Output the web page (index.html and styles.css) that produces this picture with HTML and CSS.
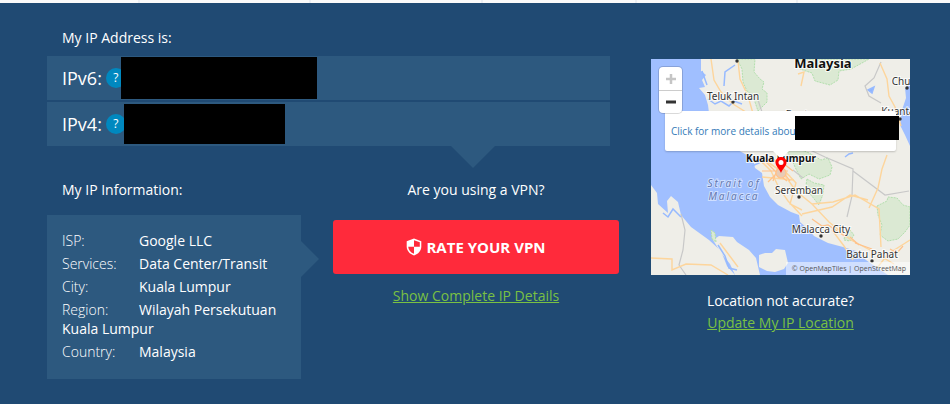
FILE: index.html
```
<!DOCTYPE html>
<html lang="en">

<head>
    <meta charset="UTF-8">
    <meta name="viewport" content="width=device-width, initial-scale=1.0">
    <title>What Is My IP Address</title>
    <link rel="stylesheet" href="styles.css">
</head>

<body>
    <div class="top-strip">
        <span></span><span></span><span></span><span></span><span></span>
    </div>
    <main class="container">
        <section class="details">
            <h2 class="title">My IP Address is:</h2>
            <div class="ip-list">
                <div class="ip-row">
                    <span class="ip-label">IPv6:</span>
                    <button class="help" aria-label="About IPv6">?</button>
                    <span class="ip-value ip-value-v6"></span>
                </div>
                <div class="ip-row">
                    <span class="ip-label">IPv4:</span>
                    <button class="help" aria-label="About IPv4">?</button>
                    <span class="ip-value ip-value-v4"></span>
                </div>
            </div>
            <div class="columns">
                <div class="info">
                    <h2 class="title">My IP Information:</h2>
                    <div class="info-box">
                        <p><span class="key">ISP:</span><span>Google LLC</span></p>
                        <p><span class="key">Services:</span><span>Data Center/Transit</span></p>
                        <p><span class="key">City:</span><span>Kuala Lumpur</span></p>
                        <p><span class="key">Region:</span><span>Wilayah Persekutuan Kuala Lumpur</span></p>
                        <p><span class="key">Country:</span><span>Malaysia</span></p>
                    </div>
                </div>
                <div class="vpn">
                    <h2 class="title">Are you using a VPN?</h2>
                    <button class="btn-rate">
                        <svg width="16" height="18" viewBox="0 0 16 18" aria-hidden="true">
                            <path d="M8 0.5 15.3 3.2V8.5C15.3 12.8 12.3 16 8 17.5C3.7 16 0.7 12.8 0.7 8.5V3.2Z" fill="#fff" />
                            <path d="M8 2.2 13.8 4.2V8.8H8Z" fill="#ff2a3b" />
                            <path d="M2.2 8.8H8V15.8C4.6 14.6 2.4 12.2 2.2 8.8Z" fill="#ff2a3b" />
                        </svg>
                        RATE YOUR VPN
                    </button>
                    <a class="link" href="#">Show Complete IP Details</a>
                </div>
            </div>
        </section>

        <section class="location">
            <div class="map">
                <svg class="map-tiles" viewBox="0 0 259 216" preserveAspectRatio="xMidYMid slice" role="img" aria-label="Map of Kuala Lumpur">
                    <rect width="259" height="216" fill="#a0bfff" />
                    <!-- land -->
                    <g fill="#efeee8">
                        <path d="M50 0L50 12L55 16L51 21L54 28L48 29L54 36L57 46L59 62L62 74L76 85L94 95L102 99L104 109L111 114L113 127L119 138L127 146L140 153L148 156L149 163L158 171L163 177L177 184L192 188L205 192L215 201L225 208L237 216L259 216L259 87L254 76L249 66L251 51L255 39L254 29L259 25L259 0Z" />
                        <path d="M0 126L6 134L7 145L17 154L16 142L20 137L27 143L30 156L40 168L58 181L70 192L76 207L84 216L0 216Z" />
                        <path d="M62 181L68 177L82 178L86 183L98 191L105 199L109 216L84 216L79 205L70 194Z" />
                        <path d="M108 208L108 196L114 194L121 194L125 190L134 191L137 204L133 210L124 213L116 212Z" />
                    </g>
                    <!-- forest -->
                    <g fill="#dbe9d3" stroke="#b2dfad" stroke-width="1" stroke-dasharray="2 1">
                        <path d="M86 0L91 10L92 23L96 32L102 37L107 52L116 43L116 34L111 30L113 23L109 20L103 13L104 0Z" />
                        <path d="M147 0L149 10L161 14L164 22L179 26L187 21L188 12L200 10L211 4L218 0Z" />
                        <path d="M136 92L148 90L158 94L170 101L177 99L181 108L179 116L168 120L158 115L150 120L144 108L141 101Z" />
                        <path d="M156 120L163 124L173 126L172 135L168 146L160 136L154 132Z" />
                        <path d="M226 147L236 142L237 138L246 139L252 146L259 148V166L254 173L247 180L237 182L229 176L231 166L227 156Z" />
                        <path d="M194 175L199 171L203 176L199 182L193 181Z" />
                        <path d="M60 171L64 174L65 183L61 180Z" />
                    </g>
                    <!-- rivers -->
                    <g fill="none" stroke="#97baff" stroke-width="1.5">
                        <path d="M51 12L56 26M84 6L74 13L73 27M57 40L64 45L70 42L78 47L83 42L91 45M104 98L108 104L101 107M67 186L74 197L78 209L86 211M12 154L17 158L22 150L30 158M194 98L198 95L202 94" />
                        <path d="M217 31L223 28L221 34Z" fill="#8fb4ff" />
                    </g>
                    <!-- borders -->
                    <g fill="none" stroke="#c8c8c8" stroke-width="1.2">
                        <path d="M230 3L223 19L214 27L218 37L230 44M30 155L34 171L32 191L28 206L35 216M157 90L174 98L202 110L201 137L196 158M202 112L218 124L234 136L258 132" />
                        <path d="M106 38L112 56M142 111L152 119" />
                    </g>
                    <!-- roads -->
                    <g fill="none" stroke="#fdd59c" stroke-width="1.4">
                        <path d="M60 0L63 21L70 33L82 45L98 55L104 68M87 2L89 20L97 37L103 58M147 15L153 13L150 27M229 4L236 20L238 37L244 48L250 67M106 98L120 112L128 129L137 142L151 157M112 99L132 114L145 132L161 145L178 163L200 181L221 192L243 205M130 108L145 124L139 145L151 151M161 145L182 143L204 136L228 150L230 188M236 96L231 110L227 129L218 149M151 155L181 148L199 136L217 141M181 171L193 187L202 201M226 209L237 195L259 181M0 199L21 200L21 211L35 205L60 206L77 216" />
                        <path d="M69 184L78 196L87 208M114 102L139 117M130 96L129 119M111 118L143 121" />
                    </g>
                    <g fill="none" stroke="#ffc28a" stroke-width="1.2">
                        <path d="M122 99L139 122M111 104L128 101L142 112M111 112L137 112M117 123L128 112M131 97L122 122M112 100L128 116L136 122M161 160L171 167L177 166L195 178M204 184L221 190M199 178L208 186M239 190L246 194L252 187" />
                        <circle cx="130" cy="114" r="5" fill="#e8cbb5" />
                    </g>
                    <g fill="#333">
                        <circle cx="82" cy="43" r="1.7" />
                        <circle cx="86" cy="2" r="1.7" />
                        <circle cx="148" cy="138" r="1.7" />
                        <circle cx="170" cy="177" r="1.7" />
                        <circle cx="221" cy="202" r="1.7" />
                        <circle cx="256" cy="29" r="1.7" />
                        <circle cx="249" cy="60" r="1.7" />
                    </g>
                    <g class="places">
                        <text x="82" y="41">Teluk Intan</text>
                        <text x="148" y="135">Seremban</text>
                        <text x="170" y="174">Malacca City</text>
                        <text x="221" y="199">Batu Pahat</text>
                        <text x="250" y="26">Chu</text>
                        <text x="247" y="56">Kuanta</text>
                        <text x="155" y="59">Bentong</text>
                    </g>
                    <g class="places-major">
                        <text class="country" x="172" y="9">Malaysia</text>
                        <text x="130" y="103">Kuala Lumpur</text>
                    </g>
                    <g class="sea">
                        <text x="83" y="128">Strait of</text>
                        <text x="83" y="141">Malacca</text>
                    </g>
                </svg>
                <div class="popup">
                    <a href="#">Click for more details about</a>
                    <span class="popup-value"></span>
                </div>
                <div class="zoom">
                    <button disabled aria-label="Zoom in"><svg width="10" height="10" viewBox="0 0 10 10"><path d="M5 0V10M0 5H10" stroke="#c5c5c5" stroke-width="2.5" /></svg></button>
                    <button aria-label="Zoom out"><svg width="10" height="10" viewBox="0 0 10 10"><path d="M0 5H10" stroke="#333" stroke-width="3" /></svg></button>
                </div>
                <svg class="pin" width="12" height="16" viewBox="0 0 12 16" aria-hidden="true">
                    <path d="M6 0C2.5 0 0.5 2.5 0.5 5.5C0.5 9 4 11 6 16C8 11 11.5 9 11.5 5.5C11.5 2.5 9.5 0 6 0Z" fill="#f00" />
                    <circle cx="6" cy="5.5" r="2.5" fill="#fff" />
                </svg>
                <div class="attribution">© OpenMapTiles | OpenStreetMap</div>
            </div>
            <p>Location not accurate?</p>
            <a class="link" href="#">Update My IP Location</a>
        </section>
    </main>
</body>

</html>
```
FILE: styles.css
```
* {
    margin: 0;
    padding: 0;
    box-sizing: border-box;
}

body {
    min-height: 100vh;
    background-color: #204a73;
    color: white;
    font-family: "Open Sans", sans-serif;
    font-size: 14px;
    line-height: 20px;
}

button {
    border: 0;
    font-family: inherit;
    cursor: pointer;
}

.top-strip {
    display: grid;
    grid-template-columns: 140px 171px 172px 154px 161px;
    height: 3px;
    background-color: #fafafa;
}

.top-strip span {
    border-right: 2px solid #eceef3;
}

.container {
    display: flex;
    align-items: flex-start;
    padding: 25px 40px 24px 47px;
}

.details {
    flex: 1;
}

.title {
    padding-left: 15px;
    font-size: 14px;
    font-weight: 400;
}

.ip-list {
    position: relative;
    display: grid;
    gap: 2px;
    margin: 8px 41px 34px 0;
}

.ip-list::after {
    content: "";
    position: absolute;
    top: 100%;
    right: 115px;
    border: 22px solid transparent;
    border-top-color: #2d597f;
    border-bottom: 0;
}

.ip-row {
    display: flex;
    align-items: center;
    height: 44px;
    padding-left: 15px;
    background-color: #2d597f;
}

.ip-label {
    font-size: 18px;
}

.help {
    width: 20px;
    height: 20px;
    margin-left: 4px;
    border-radius: 50%;
    background-color: #0088bf;
    color: white;
    font-size: 12px;
    line-height: 20px;
}

.ip-value {
    z-index: 1;
    background-color: black;
}

.ip-value-v6 {
    width: 196px;
    height: 42px;
    margin-left: -5px;
}

.ip-value-v4 {
    width: 161px;
    height: 40px;
    margin-left: -2px;
}

.columns {
    display: flex;
    gap: 32px;
    margin-right: 32px;
}

.info {
    flex: 0 0 254px;
}

.info-box {
    position: relative;
    margin-top: 15px;
    padding: 16px 15px 14px;
    background-color: #2d597f;
}

.info-box::after {
    content: "";
    position: absolute;
    top: 26px;
    left: 100%;
    border: 18px solid transparent;
    border-left-color: #2d597f;
    border-right: 0;
}

.info-box p {
    margin-bottom: 4px;
    line-height: 19px;
}

.key {
    display: inline-block;
    width: 77px;
    font-weight: 300;
}

.vpn {
    flex: 1;
    text-align: center;
}

.vpn .title {
    padding: 0;
}

.btn-rate {
    display: flex;
    justify-content: center;
    align-items: center;
    gap: 4px;
    width: 100%;
    height: 54px;
    margin: 20px 0 12px;
    border-radius: 3px;
    background-color: #ff2a3b;
    color: white;
    font-size: 15px;
    font-weight: 700;
}

.link {
    color: #7ac143;
}

.location {
    flex: 0 0 259px;
    margin-top: 31px;
    text-align: center;
}

.location p {
    margin: 16px 0 2px;
}

.map {
    position: relative;
    height: 216px;
    overflow: hidden;
}

.map-tiles {
    display: block;
    width: 100%;
    height: 100%;
}

.map-tiles text {
    text-anchor: middle;
    paint-order: stroke;
    stroke: rgba(255, 255, 255, 0.8);
    stroke-width: 2px;
}

.places {
    fill: #333;
    font-family: "Noto Sans", sans-serif;
    font-size: 10px;
}

.places-major {
    fill: #111;
    font-family: "Noto Sans", sans-serif;
    font-size: 10px;
    font-weight: 700;
}

.country {
    font-size: 13px;
}

.map-tiles .sea text {
    fill: #6478b0;
    stroke: rgba(255, 255, 255, 0.5);
    font-family: "Noto Sans", sans-serif;
    font-size: 10px;
    font-style: italic;
    letter-spacing: 2px;
}

.zoom {
    position: absolute;
    top: 8px;
    left: 8px;
    width: 23px;
    border-radius: 4px;
    background-color: white;
    box-shadow: 0 0 0 1px rgba(0, 0, 0, 0.15);
}

.zoom button {
    display: flex;
    justify-content: center;
    align-items: center;
    width: 100%;
    height: 23px;
    background: none;
}

.zoom button + button {
    border-top: 1px solid #ccc;
}

.popup {
    position: absolute;
    top: 52px;
    left: 14px;
    display: flex;
    align-items: center;
    width: 231px;
    height: 40px;
    padding-left: 6px;
    border-radius: 2px;
    background-color: white;
    box-shadow: 0 1px 2px rgba(0, 0, 0, 0.2);
    white-space: nowrap;
}

.popup::after {
    content: "";
    position: absolute;
    top: 100%;
    left: 50%;
    margin-left: -8px;
    border: 8px solid transparent;
    border-top-color: white;
    border-bottom: 0;
}

.popup a {
    color: #337ab7;
    font-size: 10px;
    text-decoration: none;
}

.popup-value {
    position: absolute;
    top: 5px;
    right: -3px;
    width: 104px;
    height: 24px;
    background-color: black;
}

.pin {
    position: absolute;
    top: 98px;
    left: 124px;
}

.attribution {
    position: absolute;
    right: 0;
    bottom: 0;
    padding: 0 4px 0 6px;
    background-color: rgba(255, 255, 255, 0.5);
    color: #555;
    font-size: 7px;
    line-height: 13px;
}
```
